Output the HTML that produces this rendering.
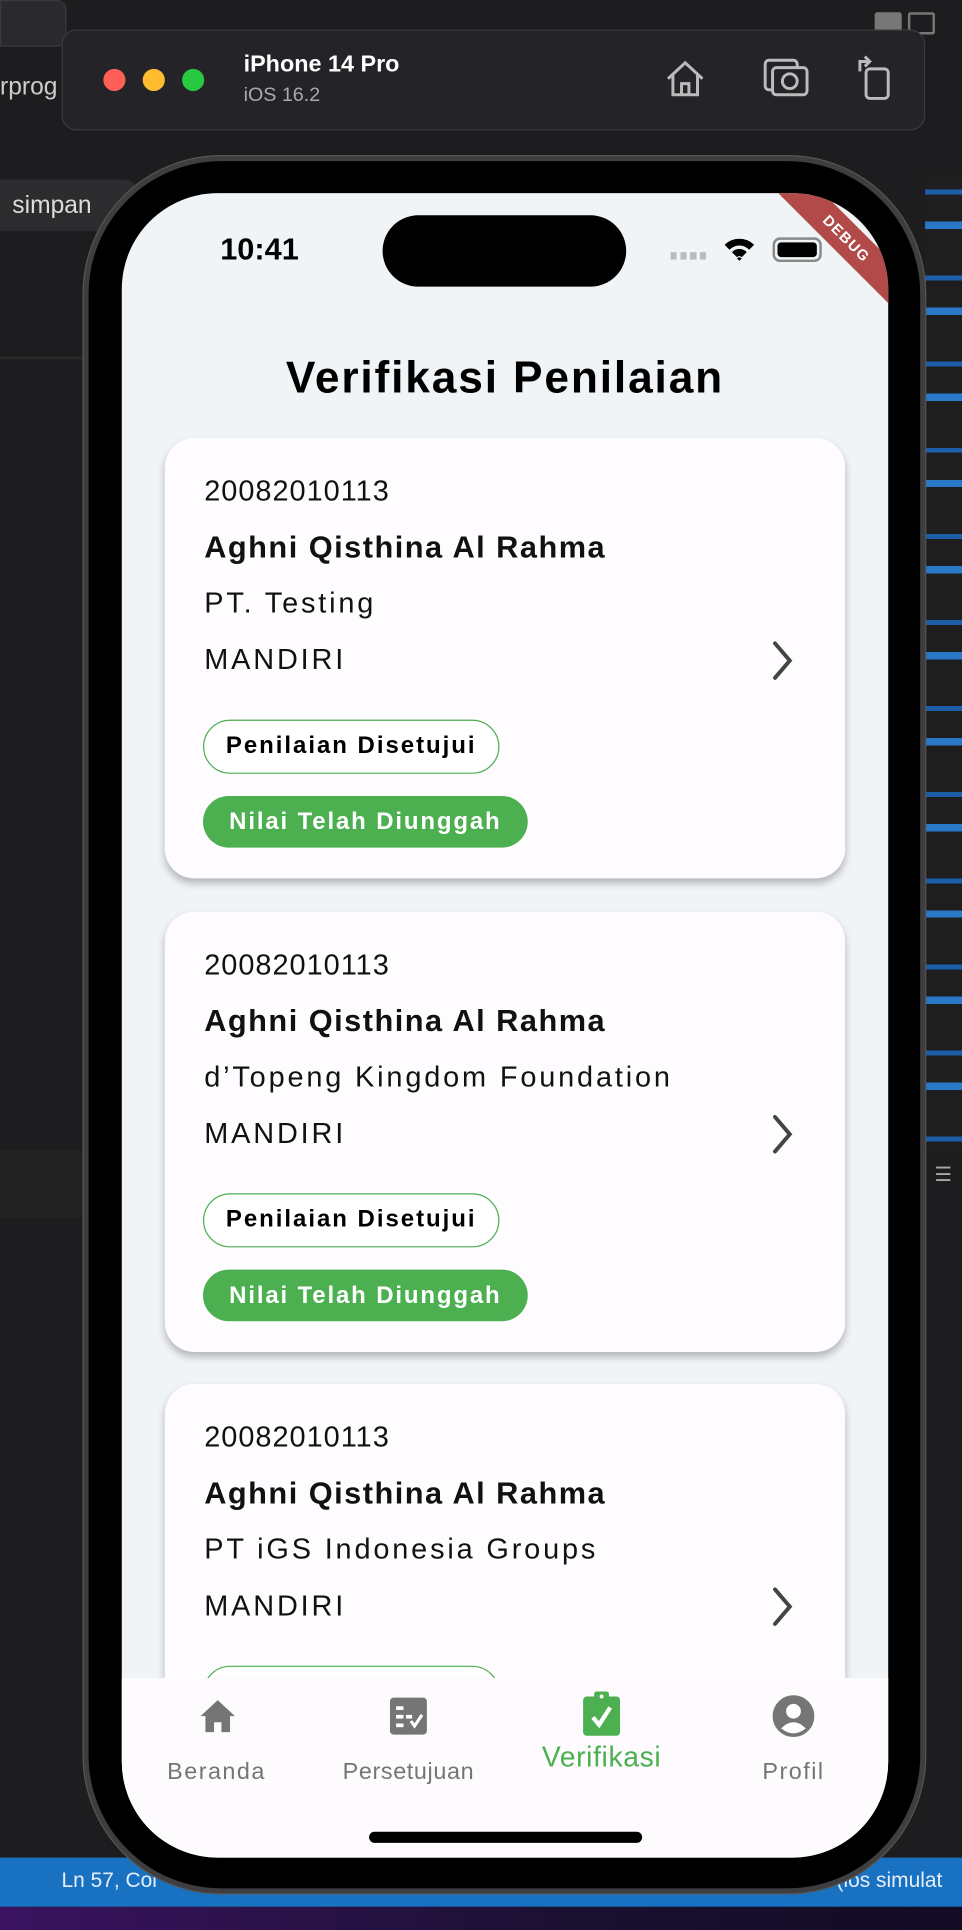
<!DOCTYPE html>
<html><head><meta charset="utf-8"><style>
*{margin:0;padding:0;box-sizing:border-box}
html,body{width:962px;height:1930px;overflow:hidden;background:#1c1c1e;font-family:"Liberation Sans",sans-serif}
#w{position:absolute;left:0;top:0;width:782px;height:1569px;transform:scale(1.2302);transform-origin:0 0;background:#1d1d1f;overflow:hidden}
.a{position:absolute}
.card{position:absolute;left:134px;width:553px;height:358px;background:#fefcff;border-radius:24px;box-shadow:0 4px 6px rgba(0,0,0,.25)}
.card .t{position:absolute;left:32px;font-size:23.5px;color:#111;letter-spacing:2.3px;white-space:nowrap;line-height:28px}
.card .num{letter-spacing:0.8px}
.card .n{font-weight:bold;font-size:25px;letter-spacing:1.2px}
.b1{position:absolute;left:31px;top:229px;width:241px;height:44px;border:1.5px solid #4caf50;border-radius:22px;font-weight:bold;font-size:19.5px;line-height:41px;text-align:center;color:#000;background:#fff;letter-spacing:1.6px;white-space:nowrap}
.b2{position:absolute;left:31px;top:291px;width:264px;height:42px;background:#4caf50;border-radius:21px;font-weight:bold;font-size:19.5px;line-height:42px;text-align:center;color:#fff;letter-spacing:1.5px;white-space:nowrap}
.nav{position:absolute;top:1430px;font-size:19px;color:#757575;text-align:center;width:140px;letter-spacing:1.2px}
</style></head><body><div id="w">
<div class="a" style="left:0;top:0;width:54px;height:38px;border:1px solid #3a3a3c;border-radius:0 8px 8px 0;background:#2a2a2c"></div>
<div class="a" style="left:0;top:60px;font-size:20px;color:#ccc">rprog</div>
<div class="a" style="left:0;top:146px;width:110px;height:42px;background:#2c2c2e;border-radius:0 8px 8px 0;color:#ddd;font-size:20px;line-height:42px;padding-left:10px">simpan</div>
<div class="a" style="left:0;top:290px;width:70px;height:2px;background:#2a2a2a"></div>
<div class="a" style="left:0;top:935px;width:70px;height:55px;background:#222"></div>
<div class="a" style="left:711px;top:10px;width:22px;height:18px;background:#777;border-radius:2px"></div>
<div class="a" style="left:738px;top:10px;width:22px;height:18px;border:2px solid #777;border-radius:2px"></div>
<div class="a" style="left:752px;top:140px;width:30px;height:800px;background:repeating-linear-gradient(#1e1e1e 0 14px,#1c5fa8 14px 18px,#1e1e1e 18px 40px,#2a78c8 40px 46px,#1e1e1e 46px 70px)"></div>
<div class="a" style="left:752px;top:945px;width:30px;height:40px;color:#aaa;font-size:16px;text-align:right;padding-right:8px">☰</div>
<div class="a" style="left:0;top:1510px;width:782px;height:40px;background:#1971c2"></div>
<div class="a" style="left:50px;top:1519px;color:#e6eefa;font-size:17px">Ln 57, Col</div>
<div class="a" style="left:680px;top:1519px;color:#e6eefa;font-size:17px;white-space:nowrap">(ios simulat</div>
<div class="a" style="left:0;top:1550px;width:782px;height:20px;background:linear-gradient(90deg,#3a1360,#1a1030 60%,#120c24)"></div>
<div class="a" style="left:50px;top:24px;width:702px;height:82px;background:#242327;border:1px solid #3a3a3d;border-radius:12px"></div>
<div class="a" style="left:84px;top:56px;width:18px;height:18px;border-radius:50%;background:#fe5f57"></div>
<div class="a" style="left:116px;top:56px;width:18px;height:18px;border-radius:50%;background:#febc2e"></div>
<div class="a" style="left:148px;top:56px;width:18px;height:18px;border-radius:50%;background:#28c840"></div>
<div class="a" style="left:198px;top:42px;color:#fff;font-weight:bold;font-size:19px">iPhone 14 Pro</div>
<div class="a" style="left:198px;top:69px;color:#aaa;font-size:16px">iOS 16.2</div>
<svg class="a" style="left:540px;top:48px" width="34" height="32" viewBox="0 0 34 32" fill="none" stroke="#bbb" stroke-width="2.4"><path d="M3 16 L17 3 L31 16 M7 12 V29 H27 V12 M14 29 V20 H20 V29"/></svg>
<svg class="a" style="left:620px;top:46px" width="38" height="34" viewBox="0 0 38 34" fill="none" stroke="#bbb" stroke-width="2.4"><rect x="2" y="3" width="26" height="24" rx="3"/><rect x="8" y="9" width="28" height="22" rx="3" fill="#242327"/><circle cx="22" cy="20" r="6"/></svg>
<svg class="a" style="left:696px;top:44px" width="32" height="38" viewBox="0 0 32 38" fill="none" stroke="#bbb" stroke-width="2.4"><rect x="8" y="12" width="18" height="24" rx="3"/><path d="M3 14 V6 H10 M7 2 L11 6 L7 10"/></svg>
<div class="a" style="left:68px;top:127px;width:684px;height:1412px;border-radius:112px;background:#000;border:4px solid #3e3e40;box-shadow:0 0 0 1px #555"></div>
<div class="a" style="left:99px;top:157px;width:623px;height:1353px;border-radius:78px;background:#f1f4f6;overflow:hidden">
  <div class="a" style="left:80px;top:32px;font-weight:bold;font-size:25px;color:#000">10:41</div>
  <div class="a" style="left:212px;top:18px;width:198px;height:58px;border-radius:29px;background:#000"></div>
  <div class="a" style="left:446px;top:48px;width:30px;height:6px;background:repeating-linear-gradient(90deg,#bbb 0 5px,transparent 5px 8px)"></div>
  <svg class="a" style="left:489px;top:34px" width="26" height="22" viewBox="0 0 26 22"><path d="M1 8 A17 17 0 0 1 25 8 L21 12 A11 11 0 0 0 5 12Z M7 14 A8 8 0 0 1 19 14 L15 18 A3 3 0 0 0 11 18Z M13 21 L11 19 A3 3 0 0 1 15 19Z" fill="#000"/></svg>
  <div class="a" style="left:529px;top:36px;width:40px;height:20px;border:2px solid #888;border-radius:6px;padding:2px"><div style="width:100%;height:100%;background:#000;border-radius:3px"></div></div>
  <div class="a" style="left:509px;top:24px;width:160px;height:26px;background:#b24a4a;transform:rotate(45deg);color:#fff;font-weight:bold;font-size:12px;text-align:center;line-height:26px;letter-spacing:1px">DEBUG</div>
  <div class="a" style="left:0;top:129px;width:623px;text-align:center;font-weight:bold;font-size:36px;color:#000;letter-spacing:1.5px">Verifikasi Penilaian</div>
</div>
<div class="a" style="left:99px;top:157px;width:623px;height:1353px;border-radius:78px;overflow:hidden">
  <div style="position:absolute;left:-99px;top:-157px;width:782px;height:1569px">
  <div class="card" style="top:356px"><div class="t num" style="top:29px">20082010113</div><div class="t n" style="top:75px">Aghni Qisthina Al Rahma</div><div class="t" style="top:120px">PT. Testing</div><div class="t" style="top:166px">MANDIRI</div>
  <svg class="a" style="left:492px;top:164px" width="20" height="34" viewBox="0 0 20 34" fill="none" stroke="#444" stroke-width="3.2" stroke-linecap="round"><path d="M4 3 L16 17 L4 31"/></svg>
  <div class="b1">Penilaian Disetujui</div><div class="b2">Nilai Telah Diunggah</div></div>
  <div class="card" style="top:741px"><div class="t num" style="top:29px">20082010113</div><div class="t n" style="top:75px">Aghni Qisthina Al Rahma</div><div class="t" style="top:120px">d’Topeng Kingdom Foundation</div><div class="t" style="top:166px">MANDIRI</div>
  <svg class="a" style="left:492px;top:164px" width="20" height="34" viewBox="0 0 20 34" fill="none" stroke="#444" stroke-width="3.2" stroke-linecap="round"><path d="M4 3 L16 17 L4 31"/></svg>
  <div class="b1">Penilaian Disetujui</div><div class="b2">Nilai Telah Diunggah</div></div>
  <div class="card" style="top:1125px"><div class="t num" style="top:29px">20082010113</div><div class="t n" style="top:75px">Aghni Qisthina Al Rahma</div><div class="t" style="top:120px">PT iGS Indonesia Groups</div><div class="t" style="top:166px">MANDIRI</div>
  <svg class="a" style="left:492px;top:164px" width="20" height="34" viewBox="0 0 20 34" fill="none" stroke="#444" stroke-width="3.2" stroke-linecap="round"><path d="M4 3 L16 17 L4 31"/></svg>
  <div class="b1">Penilaian Disetujui</div><div class="b2">Nilai Telah Diunggah</div></div>
  <div class="a" style="left:0;top:1364px;width:782px;height:210px;background:#fdfbfe"></div>
  <svg class="a" style="left:161px;top:1380px" width="32" height="30" viewBox="0 0 32 30"><path d="M16 2 L2 15 H6 V28 H13 V20 H19 V28 H26 V15 H30Z" fill="#757575"/></svg>
  <svg class="a" style="left:316px;top:1379px" width="32" height="32" viewBox="0 0 32 32"><rect x="1" y="1" width="30" height="30" rx="3" fill="#757575"/><rect x="6" y="8" width="6" height="3" fill="#fff"/><rect x="6" y="15" width="6" height="3" fill="#fff"/><rect x="6" y="22" width="6" height="3" fill="#fff"/><rect x="14" y="15" width="5" height="3" fill="#fff"/><path d="M18 20 L21 24 L27 15" stroke="#fff" stroke-width="2.5" fill="none"/></svg>
  <svg class="a" style="left:473px;top:1374px" width="32" height="38" viewBox="0 0 32 38"><rect x="1" y="5" width="30" height="32" rx="3" fill="#4caf50"/><rect x="10" y="1" width="12" height="7" rx="2" fill="#4caf50"/><circle cx="16" cy="5" r="1.6" fill="#fff"/><path d="M9 22 L14 28 L23 14" stroke="#fff" stroke-width="3.5" fill="none"/></svg>
  <svg class="a" style="left:628px;top:1377px" width="34" height="36" viewBox="0 0 34 36"><circle cx="17" cy="18" r="17" fill="#757575"/><circle cx="17" cy="14" r="6" fill="#fff"/><path d="M7 28 Q17 18 27 28 Q17 36 7 28Z" fill="#fff"/></svg>
  <div class="nav" style="left:106px">Beranda</div>
  <div class="nav" style="left:262px;letter-spacing:0.5px">Persetujuan</div>
  <div class="nav" style="left:419px;top:1415px;font-size:23px;color:#4caf50;letter-spacing:0.5px">Verifikasi</div>
  <div class="nav" style="left:575px">Profil</div>
  <div class="a" style="left:300px;top:1489px;width:222px;height:9px;border-radius:5px;background:#000"></div>
  </div>
</div>
</div></body></html>
